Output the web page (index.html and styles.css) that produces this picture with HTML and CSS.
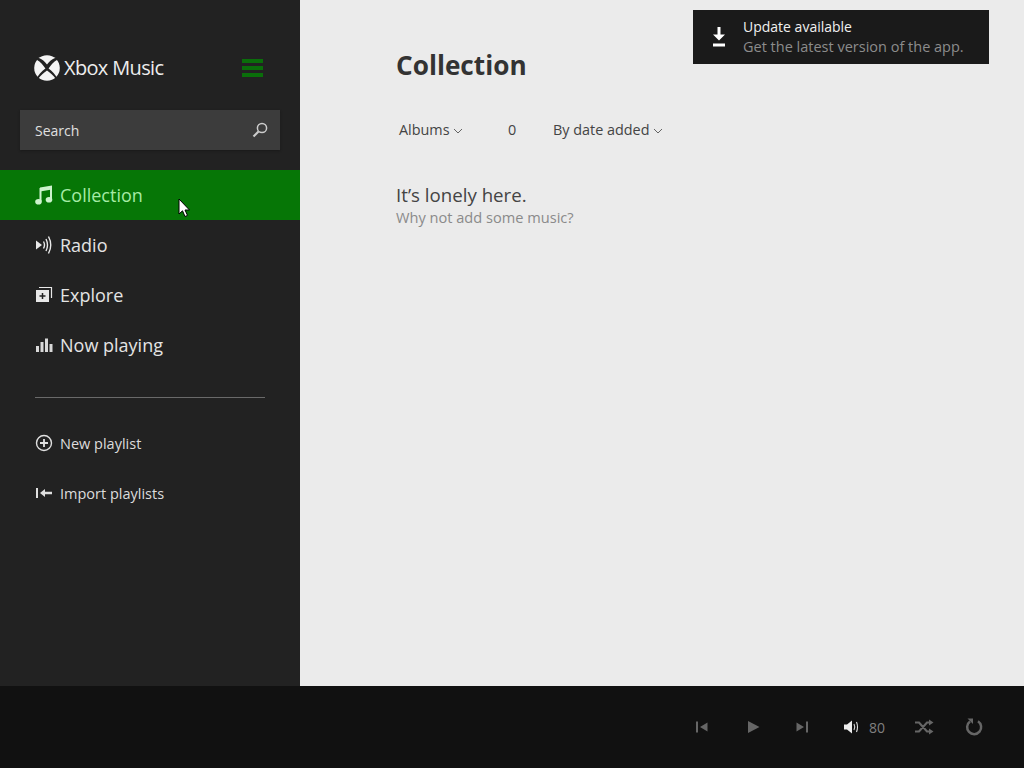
FILE: index.html
```html
<!DOCTYPE html>
<html lang="en">
<head>
<meta charset="utf-8">
<title>Xbox Music</title>
<link rel="stylesheet" href="styles.css">
</head>
<body>
<div class="app">
  <div class="main">
    <aside class="sidebar">
      <div class="brand">
        <svg class="logo" width="26" height="26" viewBox="0 0 26 26"><circle cx="13" cy="13" r="12.800" fill="#f4f4f4"/><path d="M4.500 2.800C8 4 11 6.800 13 9.500C15 6.800 18 4 21.500 2.800L23.300 4.800C19.500 7 16.500 10.500 14.600 13.500C18.500 16.500 21.800 20 23 23.300L22 24.300C19.500 20.500 16 17.500 13 15.500C10 17.500 6.500 20.500 4 24.300L3 23.300C4.200 20 7.500 16.500 11.400 13.500C9.500 10.500 6.500 7 2.700 4.800Z" fill="#222"/></svg>
        <span class="brand-name">Xbox Music</span>
        <span class="burger"><i></i><i></i><i></i></span>
      </div>
      <div class="search"><span>Search</span>
        <svg width="16" height="16" viewBox="0 0 16 16"><circle cx="10" cy="6" r="4.600" fill="none" stroke="#ccc" stroke-width="1.500"/><path d="M6.500 9.500L1.500 14.500" stroke="#ccc" stroke-width="2.200"/></svg>
      </div>
      <nav class="nav">
        <a class="nav-item active">
          <svg width="18" height="20" viewBox="0 0 18 20"><path d="M5 2.500L17 .5V4.500L5 6.500Z" fill="#cdf3cd"/><path d="M5.500 3V16.500M16 2V14.500" fill="none" stroke="#cdf3cd" stroke-width="2"/><ellipse cx="3.500" cy="16.700" rx="3.300" ry="2.800" fill="#cdf3cd"/><ellipse cx="14" cy="14.700" rx="3.300" ry="2.800" fill="#cdf3cd"/></svg>
          <span>Collection</span></a>
        <a class="nav-item">
          <svg width="18" height="20" viewBox="0 0 18 20"><path d="M1 5.500L7 10L1 14.500Z" fill="#e8e8e8"/><path d="M8.500 6.500Q10.500 10 8.500 13.500M11 4Q14 10 11 16M13.500 1.500Q18 10 13.500 18.500" fill="none" stroke="#e8e8e8" stroke-width="1.400"/></svg>
          <span>Radio</span></a>
        <a class="nav-item">
          <svg width="18" height="20" viewBox="0 0 18 20"><path d="M4 2.500H16.500V13" fill="none" stroke="#e8e8e8" stroke-width="1.200"/><path d="M1 5H14V17H1Z" fill="#e8e8e8"/><path d="M7.500 8V14M4.500 11H10.500" stroke="#222" stroke-width="1.500"/></svg>
          <span>Explore</span></a>
        <a class="nav-item">
          <svg width="18" height="20" viewBox="0 0 18 20"><path d="M1 11h3v6H1zM5.500 7h3v10h-3zM10 3.500h3V17h-3zM14.500 9h3v8h-3z" fill="#d8d8d8"/></svg>
          <span>Now playing</span></a>
      </nav>
      <hr class="rule">
      <div class="actions">
        <a class="action">
          <svg width="18" height="18" viewBox="0 0 18 18"><circle cx="9" cy="9" r="7.500" fill="none" stroke="#e0e0e0" stroke-width="1.400"/><path d="M9 5V13M5 9H13" stroke="#e0e0e0" stroke-width="1.800"/></svg>
          <span>New playlist</span></a>
        <a class="action">
          <svg width="18" height="18" viewBox="0 0 18 18"><path d="M1 4H3V14H1Z" fill="#e0e0e0"/><path d="M5 9L10 5V7.800H17V10.200H10V13Z" fill="#e0e0e0"/></svg>
          <span>Import playlists</span></a>
      </div>
    </aside>
    <section class="content">
      <h1 class="title">Collection</h1>
      <div class="filters">
        <span class="filter filter-albums">Albums <svg class="chev" width="10" height="6" viewBox="0 0 10 6"><path d="M1 1L5 5L9 1" fill="none" stroke="#555" stroke-width=".9"/></svg></span>
        <span class="filter filter-count">0</span>
        <span class="filter">By date added <svg class="chev" width="10" height="6" viewBox="0 0 10 6"><path d="M1 1L5 5L9 1" fill="none" stroke="#555" stroke-width=".9"/></svg></span>
      </div>
      <p class="empty-head">It’s lonely here.</p>
      <p class="empty-sub">Why not add some music?</p>
    </section>
  </div>
  <footer class="player">
    <svg class="ctl-a" width="14" height="14" viewBox="0 0 14 14"><path d="M1 1.500H3V12.500H1ZM12.500 2.500V11.500L5 7Z" fill="#666"/></svg>
    <svg class="ctl-b" width="14" height="14" viewBox="0 0 14 14"><path d="M1 1L12.500 7L1 13Z" fill="#666"/></svg>
    <svg class="ctl-c" width="14" height="14" viewBox="0 0 14 14"><path d="M11 1.500H13V12.500H11ZM1.500 2.500V11.500L9 7Z" fill="#666"/></svg>
    <svg class="ctl-d" width="17" height="16" viewBox="0 0 17 16"><path d="M1 5.500H4L9 1.500V14.500L4 10.500H1Z" fill="#eee"/><path d="M11 5Q12.500 8 11 11M13.500 3Q15.500 8 13.500 13" fill="none" stroke="#ddd" stroke-width="1.100"/></svg>
    <span class="vol">80</span>
    <svg class="ctl-e" width="20" height="16" viewBox="0 0 20 16"><path d="M1 3.500H5L13 12.500H16M1 12.500H5L13 3.500H16" fill="none" stroke="#666" stroke-width="2.200"/><path d="M15 0.500L19.500 3.500L15 6.500ZM15 9.500L19.500 12.500L15 15.500Z" fill="#666"/></svg>
    <svg class="ctl-f" width="18" height="18" viewBox="0 0 18 18"><path d="M5 3.500A7 7 0 1 0 13 3.300" fill="none" stroke="#666" stroke-width="2.500"/><path d="M2.500 0.500H8V6Z" fill="#666"/></svg>
  </footer>
  <div class="toast">
    <svg width="14" height="20" viewBox="0 0 14 20"><path d="M5.500 0H8.500V7.500H13L7 13.500L1 7.500H5.500Z" fill="#fff"/><path d="M1 16.500H13V19.500H1Z" fill="#fff"/></svg>
    <div class="toast-text">
      <div class="toast-title">Update available</div>
      <div class="toast-sub">Get the latest version of the app.</div>
    </div>
  </div>
  <svg class="cursor" width="13" height="20" viewBox="0 0 13 20"><path d="M1 1V16L4.500 12.800L7 18.500L9.500 17.400L7 12H11.500Z" fill="#fff" stroke="#000" stroke-width="1"/></svg>
</div>
</body>
</html>
```
FILE: styles.css
```css
* { box-sizing: border-box; }
html, body { margin: 0; height: 100%; }
body { font-family: "Open Sans", "Noto Sans", "Liberation Sans", sans-serif; background: #ebebeb; overflow: hidden; }
.app { position: relative; width: 1024px; height: 768px; display: flex; flex-direction: column; }
.main { flex: 0 0 686px; display: flex; }
.sidebar { flex: 0 0 300px; background: #222222; color: #e8e8e8; display: flex; flex-direction: column; }
.brand { height: 110px; padding: 55px 34px 0 34px; display: flex; align-items: flex-start; }
.logo { display: block; }
.brand-name { font-size: 20px; line-height: 26px; margin-left: 4px; color: #ededed; letter-spacing: -.65px; flex: 1; }
.burger { display: flex; flex-direction: column; gap: 3px; width: 21px; margin: 4px 3px 0 0; }
.burger i { display: block; height: 4px; background: #0a6e0a; }
.search { margin: 0 20px; height: 40px; background: #3c3c3c; padding: 0 12px 0 15px; display: flex; align-items: center; justify-content: space-between; font-size: 14px; color: #e0e0e0; box-shadow: 0 1px 2px #1a1a1a; }
.nav { margin-top: 20px; display: flex; flex-direction: column; }
.nav-item { height: 50px; display: flex; align-items: center; padding-left: 35px; gap: 7px; font-size: 18px; color: #e4e4e4; }
.nav-item.active { background: #067606; color: #a5eba5; }
.rule { margin: 27px 35px 0; border: 0; height: 1px; background: #6a6a6a; }
.actions { margin-top: 20px; display: flex; flex-direction: column; }
.action { height: 50px; display: flex; align-items: center; padding-left: 35px; gap: 7px; font-size: 14.5px; color: #dcdcdc; }
.content { flex: 1; background: #ebebeb; padding: 0 0 0 96px; color: #333; }
.title { margin: 46px 0 0; font-size: 26.2px; line-height: 38px; font-weight: 700; color: #333; }
.filters { margin-top: 35px; height: 20px; display: flex; align-items: center; font-size: 14.4px; color: #444; padding-left: 3px; }
.filter { white-space: nowrap; }
.filter .chev { vertical-align: 1px; }
.filter-albums { width: 109px; }
.filter-count { width: 45px; }
.empty-head { margin: 44px 0 0; font-size: 18.7px; line-height: 24px; color: #444; }
.empty-sub { margin: 0; font-size: 14.6px; line-height: 20px; color: #8a8a8a; }
.player { flex: 0 0 82px; background: #111111; display: flex; align-items: center; justify-content: flex-end; padding-right: 41px; }
.ctl-a { margin-right: 38px; }
.ctl-b { margin-right: 34px; }
.ctl-c { margin-right: 34px; }
.ctl-d { margin-right: 9px; }
.vol { font-size: 14px; color: #808080; margin-right: 29px; }
.ctl-e { margin-right: 31px; }
.toast { position: absolute; left: 693px; top: 10px; width: 296px; height: 54px; background: #1a1a1a; display: flex; align-items: center; padding-left: 19px; gap: 17px; }
.toast-text { font-size: 14px; line-height: 20px; }
.toast-title { color: #f0f0f0; }
.toast-sub { color: #8c8c8c; font-size: 14.5px; }
.cursor { position: absolute; left: 178px; top: 198px; }
```
